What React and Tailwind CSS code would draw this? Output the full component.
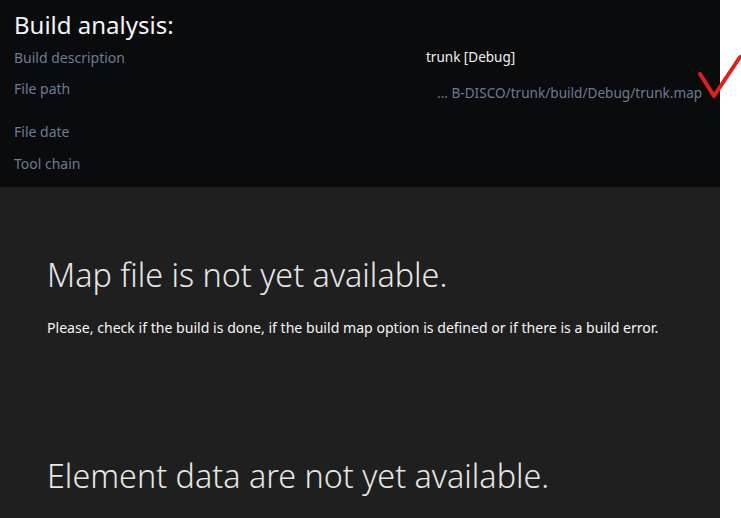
import React from "react";

const font = { fontFamily: '"Segoe UI", "Noto Sans", "Open Sans", sans-serif' };

export default function App() {
  return (
    <div className="relative flex w-[741px] h-[518px] overflow-hidden bg-white" style={font}>
      <div className="flex flex-col w-[720px] h-full">
        <div className="bg-[#0a0b0d] px-[14px] pt-[9px] pb-[8px]">
          <h1 className="text-[24px] leading-[32px] text-[#f2f4f7] font-normal">Build analysis:</h1>
          <div className="flex h-[32px] items-center text-[14px]">
            <div className="w-[412px] text-[#6b7c93]">Build description</div>
            <div className="text-[#f0f0f0] text-[13.5px]">trunk [Debug]</div>
          </div>
          <div className="flex h-[42px] items-start text-[14px]">
            <div className="w-[412px] text-[#6b7c93] pt-[6px] leading-[20px]">File path</div>
            <div className="pl-[11px] pt-[10px] leading-[20px] text-[13.6px] text-[#6b7c93]">... B-DISCO/trunk/build/Debug/trunk.map</div>
          </div>
          <div className="flex h-[32px] items-center text-[14px]">
            <div className="w-[412px] text-[#6b7c93]">File date</div>
          </div>
          <div className="flex h-[32px] items-center text-[14px]">
            <div className="w-[412px] text-[#6b7c93]">Tool chain</div>
          </div>
        </div>
        <div className="flex-1 bg-[#1f1f1f] px-[47px] pt-[65px]">
          <h2 className="text-[32.3px] leading-[44px] font-light text-[#e6e6e6]">Map file is not yet available.</h2>
          <p className="mt-[23px] text-[14.1px] leading-[18px] text-[#f5f5f5]">
            Please, check if the build is done, if the build map option is defined or if there is a build error.
          </p>
          <h2 className="mt-[116px] text-[32.3px] leading-[44px] font-light text-[#e6e6e6]">Element data are not yet available.</h2>
        </div>
      </div>
      <div className="w-[21px] h-full bg-white" />
      <svg className="absolute left-[696px] top-[53px]" width="48" height="48" viewBox="0 0 48 48">
        <path d="M4 21 L18 43 L44 4" fill="none" stroke="#e31e1e" strokeWidth="4" strokeLinecap="round" strokeLinejoin="round" />
      </svg>
    </div>
  );
}
